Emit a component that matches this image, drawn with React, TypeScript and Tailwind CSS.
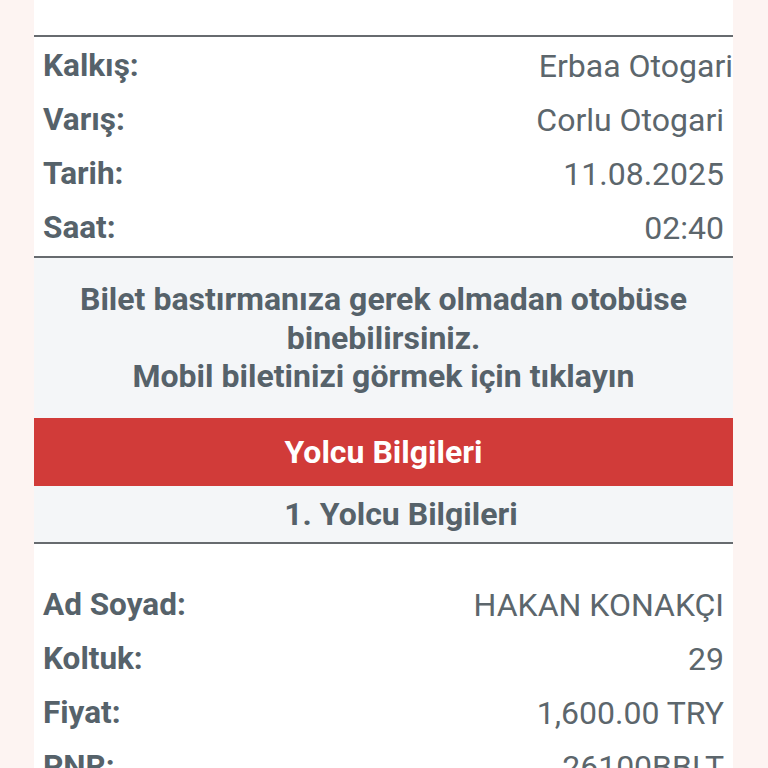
const font = { fontFamily: 'Roboto, "Noto Sans", sans-serif' };

type Row = { label: string; value: string; tight?: boolean };

const tripRows: Row[] = [
  { label: 'Kalkış:', value: 'Erbaa Otogari', tight: true },
  { label: 'Varış:', value: 'Corlu Otogari' },
  { label: 'Tarih:', value: '11.08.2025' },
  { label: 'Saat:', value: '02:40' },
];

const passengerRows: Row[] = [
  { label: 'Ad Soyad:', value: 'HAKAN KONAKÇI' },
  { label: 'Koltuk:', value: '29' },
  { label: 'Fiyat:', value: '1,600.00 TRY' },
  { label: 'PNR:', value: '26100BBLT' },
];

function InfoRow({ row }: { row: Row }) {
  return (
    <div className="flex h-[54px] items-center justify-between pl-[9px]">
      <span className="text-[31.5px] font-bold text-[#56626a]">{row.label}</span>
      <span
        className={`text-[32px] text-[#5c666c] ${row.tight ? 'pr-0' : 'pr-[9px]'}`}
      >
        {row.value}
      </span>
    </div>
  );
}

export default function App() {
  return (
    <div className="h-[768px] overflow-hidden bg-[#fdf4f2]" style={font}>
      <div className="ml-[34px] w-[699px] bg-white">
        <div className="h-[35px]" />
        <div className="border-t-2 border-[#676b6f] pt-[2px] pb-[1px]">
          {tripRows.map((row) => (
            <InfoRow key={row.label} row={row} />
          ))}
        </div>
        <div className="border-t-2 border-[#676b6f] bg-[#f4f6f8] py-[22px] text-center text-[32px] font-bold leading-[38.5px] text-[#56626a]">
          <p>Bilet bastırmanıza gerek olmadan otobüse</p>
          <p>binebilirsiniz.</p>
          <p>Mobil biletinizi görmek için tıklayın</p>
        </div>
        <div className="flex h-[68px] items-center justify-center bg-[#d13b39] text-[32px] font-bold text-white">
          Yolcu Bilgileri
        </div>
        <div className="flex h-[56px] items-center justify-center bg-[#f4f6f8] pl-[35px] text-[32px] font-bold text-[#56626a]">
          1. Yolcu Bilgileri
        </div>
        <div className="border-t-2 border-[#676b6f] pt-[34px]">
          {passengerRows.map((row) => (
            <InfoRow key={row.label} row={row} />
          ))}
        </div>
      </div>
    </div>
  );
}
